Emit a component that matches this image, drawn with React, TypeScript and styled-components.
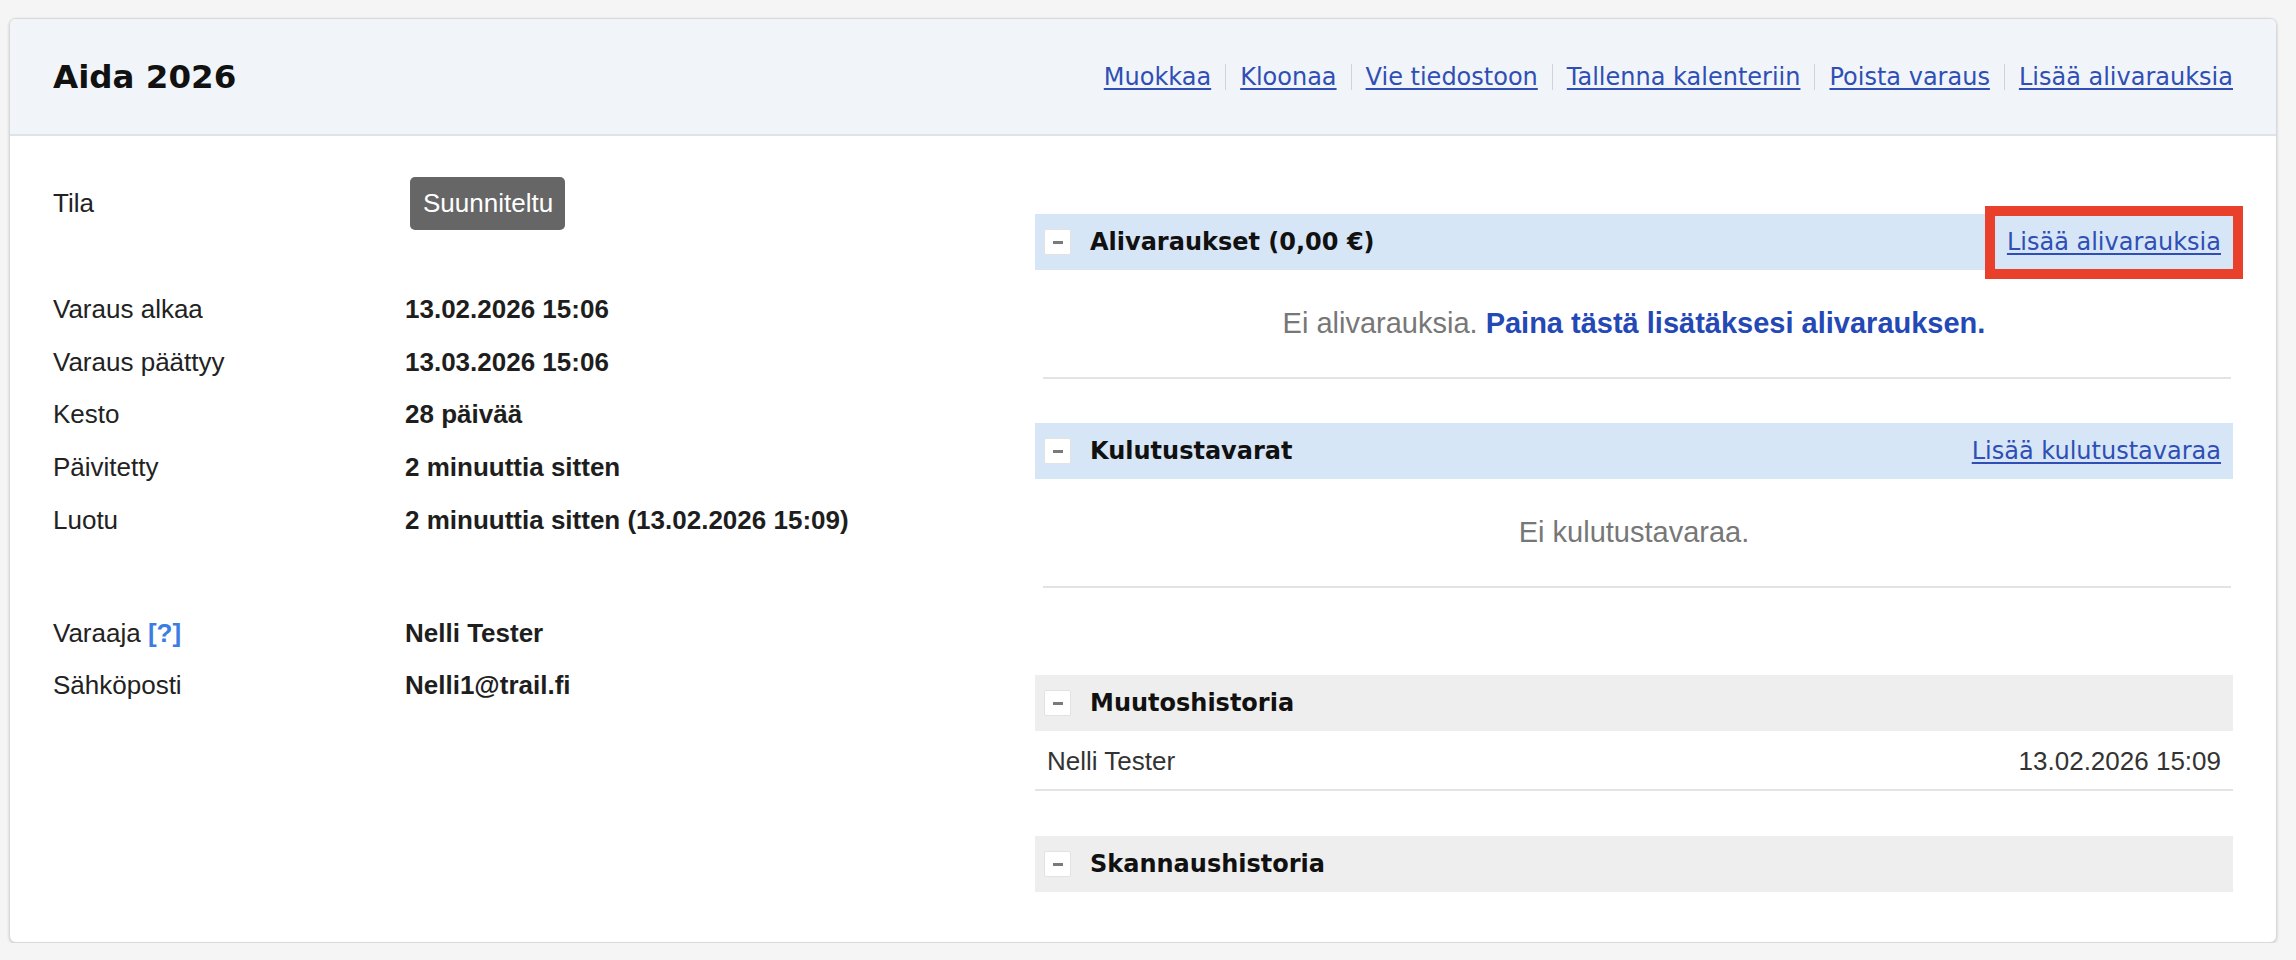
import React from 'react'
import styled, { createGlobalStyle } from 'styled-components'

const GlobalStyle = createGlobalStyle`
  html, body {
    margin: 0;
    padding: 0;
    background: #f5f5f5;
  }
  body {
    font-family: 'Liberation Sans', Arial, sans-serif;
    color: #222;
  }
`

const Card = styled.div`
  margin: 18px 19px 0 9px;
  background: #fff;
  border: 1px solid #d9d9d9;
  border-radius: 7px;
  box-shadow: 0 1px 3px rgba(0, 0, 0, 0.18);
  overflow: hidden;
`

const Header = styled.header`
  display: flex;
  align-items: center;
  justify-content: space-between;
  height: 115px;
  padding: 0 43px;
  background: #f1f5fa;
  border-bottom: 2px solid #dce3ea;
`

const Title = styled.h1`
  margin: 0;
  font-family: 'DejaVu Sans', Verdana, sans-serif;
  font-size: 32.5px;
  font-weight: bold;
  color: #111;
`

const Actions = styled.nav`
  display: flex;
  align-items: center;
`

const Link = styled.a`
  font-family: 'DejaVu Sans', Verdana, sans-serif;
  font-size: 24px;
  color: #2f4fb5;
  text-decoration: underline;
  text-underline-offset: 3px;
  cursor: pointer;
`

const Separator = styled.span`
  display: inline-block;
  width: 1px;
  height: 26px;
  margin: 0 14px;
  background: #cfd4da;
`

const Body = styled.div`
  display: grid;
  grid-template-columns: 1fr 1198px;
  padding: 0 43px 50px 43px;
`

const InfoColumn = styled.div`
  display: flex;
  flex-direction: column;
  padding-top: 41px;
`

const InfoRow = styled.div<{ $tall?: boolean }>`
  display: grid;
  grid-template-columns: 352px 1fr;
  align-items: center;
  height: ${p => (p.$tall ? '53px' : '52.75px')};
  font-size: 26px;
`

const Spacer = styled.div<{ $h: number }>`
  height: ${p => p.$h}px;
`

const Label = styled.span`
  color: #222;
`

const Help = styled.a`
  font-weight: bold;
  color: #3b7de2;
  cursor: pointer;
`

const Value = styled.span`
  font-weight: bold;
  color: #1e1e1e;
`

const StatusBadge = styled.span`
  justify-self: start;
  display: inline-flex;
  align-items: center;
  height: 53px;
  box-sizing: border-box;
  margin-left: 5px;
  padding: 0 12px 0 13px;
  background: #666;
  color: #fff;
  border-radius: 5px;
  font-size: 26px;
`

const SideColumn = styled.div`
  display: flex;
  flex-direction: column;
  padding-top: 78px;
`

const SectionHeader = styled.div<{ $tone: 'blue' | 'gray' }>`
  position: relative;
  display: flex;
  align-items: center;
  height: 56px;
  padding: 0 12px 0 9px;
  background: ${p => (p.$tone === 'blue' ? '#d7e6f6' : '#eeeeee')};
`

const Toggle = styled.span`
  display: flex;
  align-items: center;
  justify-content: center;
  width: 27px;
  height: 26px;
  box-sizing: border-box;
  background: #fff;
  border: 1px solid #e2e2e2;
  border-radius: 2px;
  margin-right: 19px;

  &::after {
    content: '';
    width: 10px;
    height: 3px;
    background: #7a7a7a;
  }
`

const SectionTitle = styled.h2`
  flex: 1;
  margin: 0;
  font-family: 'DejaVu Sans', Verdana, sans-serif;
  font-size: 24px;
  font-weight: bold;
  color: #111;
`

const Highlight = styled.span`
  position: absolute;
  top: -8px;
  right: -10px;
  width: 258px;
  height: 73px;
  box-sizing: border-box;
  border: 10px solid #e8402a;
  pointer-events: none;
`

const EmptyMessage = styled.div`
  display: flex;
  align-items: center;
  justify-content: center;
  height: 107px;
  font-size: 29px;
  color: #777;
`

const AddLink = styled.a`
  margin-left: 8px;
  font-weight: bold;
  color: #2448b6;
  cursor: pointer;
`

const Divider = styled.hr<{ $after: number }>`
  margin: 0 2px ${p => p.$after}px 8px;
  border: 0;
  height: 2px;
  background: #e3e3e3;
`

const HistoryRow = styled.div`
  display: flex;
  align-items: center;
  justify-content: space-between;
  height: 56px;
  padding: 2px 12px 0 12px;
  margin-bottom: 45px;
  border-bottom: 2px solid #e3e3e3;
  font-size: 26px;
  color: #333;
`

const info: [string, string][] = [
  ['Varaus alkaa', '13.02.2026 15:06'],
  ['Varaus päättyy', '13.03.2026 15:06'],
  ['Kesto', '28 päivää'],
  ['Päivitetty', '2 minuuttia sitten'],
  ['Luotu', '2 minuuttia sitten (13.02.2026 15:09)'],
]

const actions = [
  'Muokkaa',
  'Kloonaa',
  'Vie tiedostoon',
  'Tallenna kalenteriin',
  'Poista varaus',
  'Lisää alivarauksia',
]

const App = () => (
  <>
    <GlobalStyle />
    <Card>
      <Header>
        <Title>Aida 2026</Title>
        <Actions>
          {actions.map((a, i) => (
            <React.Fragment key={a}>
              {i > 0 && <Separator />}
              <Link>{a}</Link>
            </React.Fragment>
          ))}
        </Actions>
      </Header>

      <Body>
        <InfoColumn>
          <InfoRow $tall>
            <Label>Tila</Label>
            <StatusBadge>Suunniteltu</StatusBadge>
          </InfoRow>
          <Spacer $h={53} />
          {info.map(([k, v]) => (
            <InfoRow key={k}>
              <Label>{k}</Label>
              <Value>{v}</Value>
            </InfoRow>
          ))}
          <Spacer $h={60} />
          <InfoRow>
            <Label>
              Varaaja <Help>[?]</Help>
            </Label>
            <Value>Nelli Tester</Value>
          </InfoRow>
          <InfoRow>
            <Label>Sähköposti</Label>
            <Value>Nelli1@trail.fi</Value>
          </InfoRow>
        </InfoColumn>

        <SideColumn>
          <SectionHeader $tone="blue">
            <Toggle />
            <SectionTitle>Alivaraukset (0,00 €)</SectionTitle>
            <Link>Lisää alivarauksia</Link>
            <Highlight />
          </SectionHeader>
          <EmptyMessage>
            Ei alivarauksia.
            <AddLink>Paina tästä lisätäksesi alivarauksen.</AddLink>
          </EmptyMessage>
          <Divider $after={44} />

          <SectionHeader $tone="blue">
            <Toggle />
            <SectionTitle>Kulutustavarat</SectionTitle>
            <Link>Lisää kulutustavaraa</Link>
          </SectionHeader>
          <EmptyMessage>Ei kulutustavaraa.</EmptyMessage>
          <Divider $after={87} />

          <SectionHeader $tone="gray">
            <Toggle />
            <SectionTitle>Muutoshistoria</SectionTitle>
          </SectionHeader>
          <HistoryRow>
            <span>Nelli Tester</span>
            <span>13.02.2026 15:09</span>
          </HistoryRow>

          <SectionHeader $tone="gray">
            <Toggle />
            <SectionTitle>Skannaushistoria</SectionTitle>
          </SectionHeader>
        </SideColumn>
      </Body>
    </Card>
  </>
)

export default App
